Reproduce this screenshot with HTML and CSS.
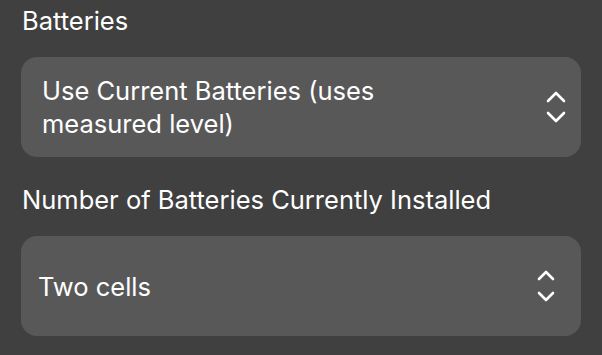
FILE: index.html
```html
<!DOCTYPE html>
<html lang="en">
<head>
  <meta charset="UTF-8">
  <meta name="viewport" content="width=device-width, initial-scale=1.0">
  <title>Batteries</title>
  <link rel="stylesheet" href="styles.css">
</head>
<body>
  <div class="panel">
    <!-- battery source -->
    <div class="field">
      <label class="field-label">Batteries</label>
      <div class="picker picker-source">
        <span class="picker-value">Use Current Batteries (uses<br>measured level)</span>
        <svg class="chevrons" width="22" height="34" viewBox="0 0 22 34">
          <path d="M3 11 L11 3 L19 11" />
          <path d="M3 23 L11 31 L19 23" />
        </svg>
      </div>
    </div>

    <!-- cell count -->
    <div class="field">
      <label class="field-label">Number of Batteries Currently Installed</label>
      <div class="picker picker-cells">
        <span class="picker-value">Two cells</span>
        <svg class="chevrons" width="20" height="34" viewBox="0 0 20 34">
          <path d="M3 10 L10 3 L17 10" />
          <path d="M3 24 L10 31 L17 24" />
        </svg>
      </div>
    </div>
  </div>
</body>
</html>
```

FILE: styles.css
```css
:root {
  --bg: #404040;
  --picker-bg: #585858;
  --text: #ffffff;
  --radius: 16px;
}

html, body {
  margin: 0;
  background: var(--bg);
}

body {
  font-family: Inter, "Noto Sans", sans-serif;
  color: var(--text);
  -webkit-font-smoothing: antialiased;
}

.panel {
  padding: 5px 21px 0;
}

.field {
  margin-bottom: 27px;
}

.field-label {
  display: block;
  font-size: 25.5px;
  line-height: 32px;
  margin: 0 0 20px 1px;
}

.picker {
  display: flex;
  align-items: center;
  justify-content: space-between;
  height: 100px;
  box-sizing: border-box;
  background: var(--picker-bg);
  border-radius: var(--radius);
  font-size: 25.5px;
}

.picker-source {
  padding: 0 14px 0 21px;
  line-height: 33px;
}

.picker-cells {
  padding: 0 25px 0 17px;
}

.chevrons {
  flex-shrink: 0;
  fill: none;
  stroke: var(--text);
  stroke-width: 2.6;
  stroke-linecap: round;
  stroke-linejoin: round;
}
```
